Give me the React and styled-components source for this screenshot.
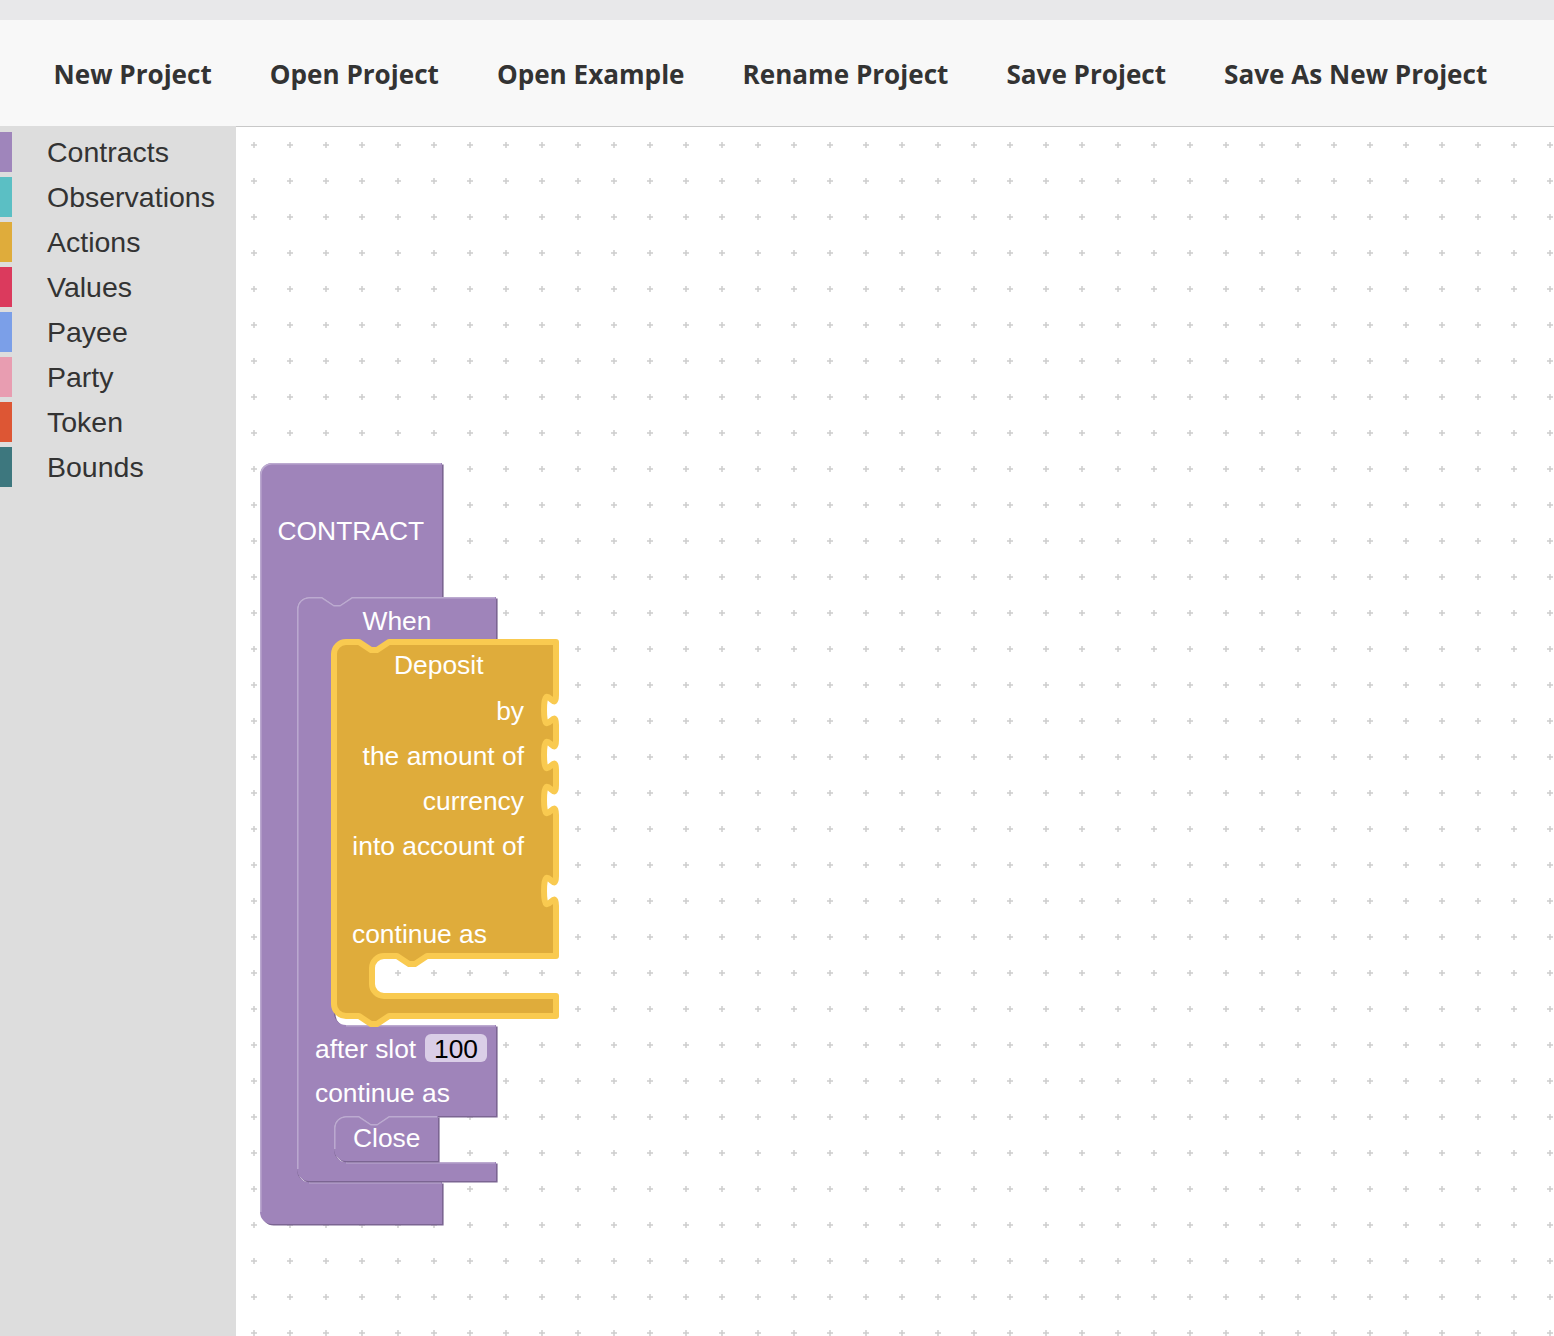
import React from 'react';
import styled, { createGlobalStyle } from 'styled-components';

const GlobalStyle = createGlobalStyle`
  html, body { margin: 0; padding: 0; }
  body { font-family: "Liberation Sans", Arial, sans-serif; background: #fff; }
  #root { height: 100vh; }
`;

const Page = styled.div`
  height: 100vh;
  display: flex;
  flex-direction: column;
  overflow: hidden;
`;

const TopStrip = styled.div`
  flex: none;
  height: 20px;
  background: #e8e8ea;
`;

const MenuBar = styled.nav`
  flex: none;
  height: 106px;
  box-sizing: border-box;
  background: #f8f8f8;
  display: flex;
  align-items: center;
  padding-left: 53.5px;
  padding-top: 2px;
  gap: 58px;
`;

const MenuItem = styled.button`
  font-family: "Open Sans", sans-serif;
  font-weight: 700;
  font-size: 26.1px;
  line-height: 1;
  color: #333;
  background: none;
  border: 0;
  padding: 0;
  white-space: nowrap;
  cursor: pointer;
`;

const Main = styled.div`
  flex: 1;
  min-height: 0;
  display: flex;
`;

const Toolbox = styled.aside`
  flex: none;
  width: 236px;
  background: #dddddd;
  padding-top: 6px;
  box-sizing: border-box;
  display: flex;
  flex-direction: column;
  gap: 5px;
`;

const Category = styled.div`
  height: 40px;
  display: flex;
  align-items: center;
  cursor: pointer;
`;

const Swatch = styled.span`
  width: 12px;
  height: 100%;
  background: ${(p) => p.$color};
  flex: none;
`;

const CategoryLabel = styled.span`
  margin-left: 35px;
  padding-top: 1px;
  font-family: "Liberation Sans", Arial, sans-serif;
  font-size: 28.5px;
  color: #333;
  white-space: nowrap;
`;

const Workspace = styled.div`
  flex: 1;
  position: relative;
  overflow: hidden;
  background: #fff;
  border-top: 1px solid #c8c8c8;
`;

const WorkspaceSvg = styled.svg`
  display: block;
  width: 100%;
  height: 100%;
`;

const Shape = styled.path`
  fill: ${(p) => p.$fill};
  stroke: ${(p) => p.$stroke || 'none'};
  stroke-width: ${(p) => p.$strokeWidth || 0};
  stroke-linejoin: round;
`;

const Highlight = styled.path`
  fill: none;
  stroke: ${(p) => p.$color};
  stroke-width: 1.5;
`;

const Label = styled.text`
  font-family: "Liberation Sans", Arial, sans-serif;
  font-size: 26.4px;
  fill: ${(p) => p.$color || '#fff'};
`;

const FieldBox = styled.rect`
  fill: #dacee7;
`;

const menu = ['New Project', 'Open Project', 'Open Example', 'Rename Project', 'Save Project', 'Save As New Project'];

const categories = [
  { name: 'Contracts', color: '#9f85bb' },
  { name: 'Observations', color: '#5bbfc4' },
  { name: 'Actions', color: '#dfac3b' },
  { name: 'Values', color: '#db3a5d' },
  { name: 'Payee', color: '#7b9fe8' },
  { name: 'Party', color: '#e89db1' },
  { name: 'Token', color: '#dd5634' },
  { name: 'Bounds', color: '#3d777e' },
];

const PURPLE = '#9f84ba';
const PURPLE_DARK = '#7b6592';
const PURPLE_LIGHT = '#bcaad0';
const YELLOW = '#dfac3b';
const YELLOW_GLOW = '#f9ca50';

const notchR = 'l 12,8 h 6 l 12,-8';
const notchL = 'l -12,8 h -6 l -12,-8';
const tab = 'c 0,20 -12,-16 -12,15 s 12,-5 12,15';

const contractPath = `M 260,475 A 12 12 0 0 1 272,463 H 442 V 597 H 352 ${notchL} H 309 A 12 12 0 0 0 297,609 V 1170 A 12 12 0 0 0 309,1182 H 442 V 1224 H 272 A 12 12 0 0 1 260,1212 Z`;

const whenPath = `M 297,609 A 12 12 0 0 1 309,597 H 322 ${notchR} H 496 V 642 H 389 ${notchL} H 346 A 12 12 0 0 0 334,654 V 1013 A 12 12 0 0 0 346,1025 H 496 V 1116 H 389 ${notchL} H 346 A 12 12 0 0 0 334,1128 V 1150 A 12 12 0 0 0 346,1162 H 496 V 1181 H 309 A 12 12 0 0 1 297,1169 Z`;

const depositPath = `M 334,654 A 12 12 0 0 1 346,642 H 359 ${notchR} H 556 V 695 ${tab} V 740 ${tab} V 785 ${tab} V 876 ${tab} V 956 H 427 ${notchL} H 384 A 12 12 0 0 0 372,968 V 984 A 12 12 0 0 0 384,996 H 556 V 1016 H 389 ${notchL} H 346 A 12 12 0 0 1 334,1004 Z`;

const closePath = `M 334,1128 A 12 12 0 0 1 346,1116 H 359 ${notchR} H 438 V 1161 H 346 A 12 12 0 0 1 334,1149 Z`;

const contractLight = 'M 260.8,1212 V 475 A 11.2 11.2 0 0 1 272,463.8 H 441 M 309,1182.8 H 441';
const whenLight = `M 297.8,1169 V 609 A 11.2 11.2 0 0 1 309,597.8 H 322 ${notchR} H 495 M 346,1025.8 H 495 M 346,1162.8 H 495`;
const closeLight = `M 334.8,1149 V 1128 A 11.2 11.2 0 0 1 346,1116.8 H 359 ${notchR} H 437`;

function PurpleBlock({ d, light }) {
  return (
    <g>
      <Shape d={d} $fill={PURPLE_DARK} transform="translate(1.6 1.6)" />
      <Shape d={d} $fill={PURPLE} />
      <Highlight d={light} $color={PURPLE_LIGHT} />
    </g>
  );
}

function BlocklyCanvas() {
  return (
    <WorkspaceSvg xmlns="http://www.w3.org/2000/svg">
      <defs>
        <pattern id="grid" x="0" y="0" width="36" height="36" patternUnits="userSpaceOnUse">
          <line x1="15" y1="18" x2="21" y2="18" stroke="#cdcdcd" strokeWidth="1.5" />
          <line x1="18" y1="15" x2="18" y2="21" stroke="#cdcdcd" strokeWidth="1.5" />
        </pattern>
      </defs>
      <rect width="100%" height="100%" fill="url(#grid)" />
      <g transform="translate(-236 -127)">
        <PurpleBlock d={contractPath} light={contractLight} />
        <Label x="277.5" y="540">CONTRACT</Label>

        <PurpleBlock d={whenPath} light={whenLight} />
        <Label x="362.5" y="630">When</Label>
        <Label x="315" y="1058">after slot</Label>
        <FieldBox x="425" y="1034" width="62" height="28" rx="6" />
        <Label x="434" y="1058" $color="#000">100</Label>
        <Label x="315" y="1102">continue as</Label>

        <Shape d={depositPath} $fill={YELLOW} $stroke={YELLOW_GLOW} $strokeWidth={6} />
        <Label x="394" y="674">Deposit</Label>
        <Label x="524" y="720" textAnchor="end">by</Label>
        <Label x="524" y="765" textAnchor="end">the amount of</Label>
        <Label x="524" y="810" textAnchor="end">currency</Label>
        <Label x="524" y="855" textAnchor="end">into account of</Label>
        <Label x="352" y="943">continue as</Label>

        <PurpleBlock d={closePath} light={closeLight} />
        <Label x="353" y="1147">Close</Label>
      </g>
    </WorkspaceSvg>
  );
}

export default function App() {
  return (
    <>
      <GlobalStyle />
      <Page>
        <TopStrip />
        <MenuBar>
          {menu.map((m) => (
            <MenuItem key={m}>{m}</MenuItem>
          ))}
        </MenuBar>
        <Main>
          <Toolbox>
            {categories.map((c) => (
              <Category key={c.name}>
                <Swatch $color={c.color} />
                <CategoryLabel>{c.name}</CategoryLabel>
              </Category>
            ))}
          </Toolbox>
          <Workspace>
            <BlocklyCanvas />
          </Workspace>
        </Main>
      </Page>
    </>
  );
}
